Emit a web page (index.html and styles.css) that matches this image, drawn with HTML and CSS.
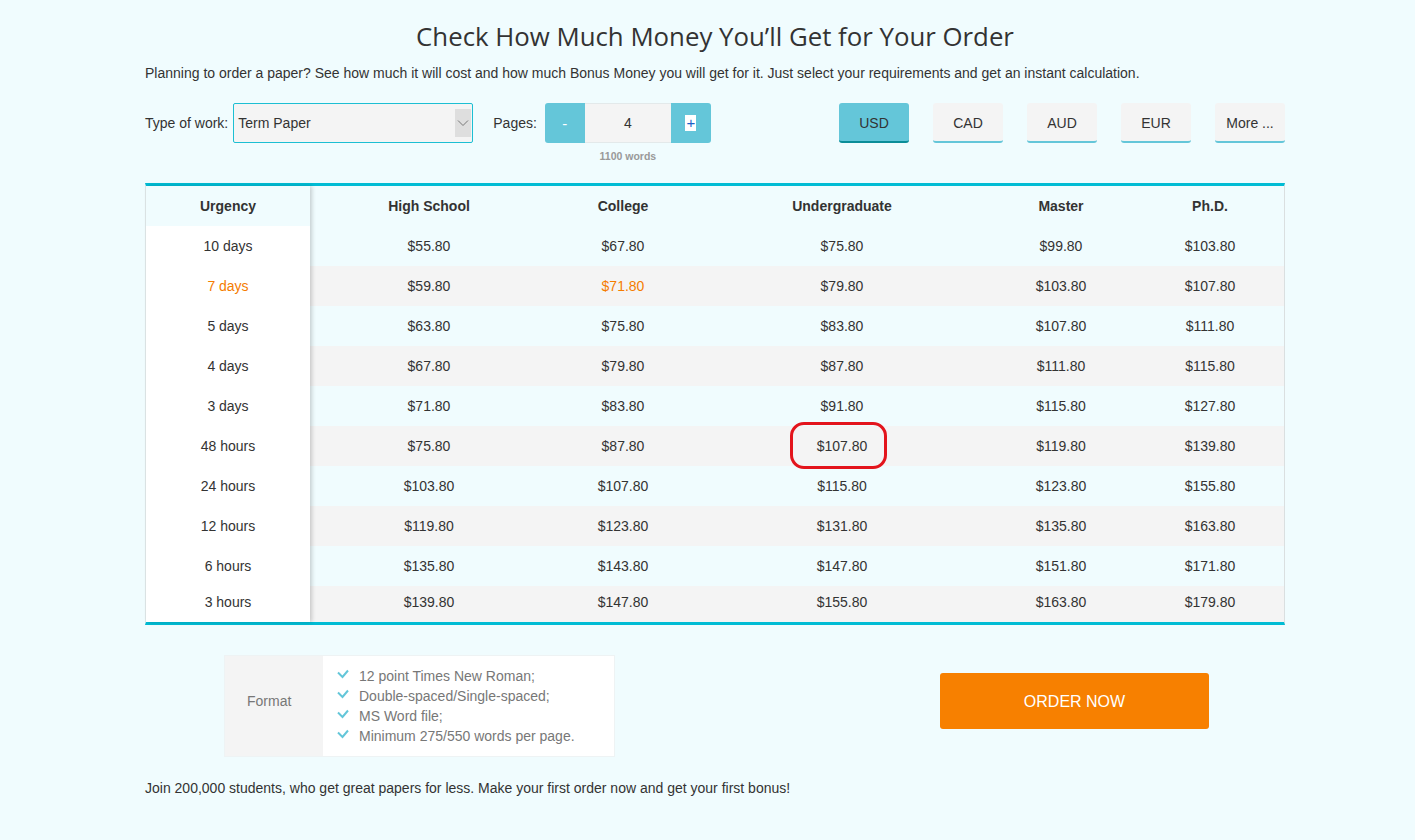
FILE: index.html
```html
<!DOCTYPE html>
<html lang="en">
<head>
<meta charset="utf-8">
<title>Check How Much Money You'll Get for Your Order</title>
<link rel="stylesheet" href="styles.css">
</head>
<body>
<div class="page">
  <h1 class="title">Check How Much Money You’ll Get for Your Order</h1>
  <p class="intro">Planning to order a paper? See how much it will cost and how much Bonus Money you will get for it. Just select your requirements and get an instant calculation.</p>

  <div class="controls">
    <span class="label">Type of work:</span>
    <div class="select">
      <span class="select-value">Term Paper</span>
      <span class="select-arrow"><svg width="12" height="8" viewBox="0 0 12 8"><path d="M1 1.5 L6 6.5 L11 1.5" fill="none" stroke="#777" stroke-width="1"/></svg></span>
    </div>
    <span class="label pages-label">Pages:</span>
    <div class="stepper-wrap">
      <div class="stepper">
        <span class="step-btn minus">-</span>
        <span class="step-value">4</span>
        <span class="step-btn plus"><span class="plus-sel">+</span></span>
      </div>
      <div class="words">1100 words</div>
    </div>
    <div class="currencies">
      <span class="cur active">USD</span>
      <span class="cur">CAD</span>
      <span class="cur">AUD</span>
      <span class="cur">EUR</span>
      <span class="cur">More ...</span>
    </div>
  </div>

  <div class="table">
    <div class="urgency-col">
      <div class="cell head">Urgency</div>
      <div class="cell">10 days</div>
      <div class="cell hl">7 days</div>
      <div class="cell">5 days</div>
      <div class="cell">4 days</div>
      <div class="cell">3 days</div>
      <div class="cell">48 hours</div>
      <div class="cell">24 hours</div>
      <div class="cell">12 hours</div>
      <div class="cell">6 hours</div>
      <div class="cell last">3 hours</div>
    </div>
    <div class="prices">
      <div class="row head"><span>High School</span><span>College</span><span>Undergraduate</span><span>Master</span><span>Ph.D.</span></div>
      <div class="row odd"><span>$55.80</span><span>$67.80</span><span>$75.80</span><span>$99.80</span><span>$103.80</span></div>
      <div class="row even"><span>$59.80</span><span class="hl">$71.80</span><span>$79.80</span><span>$103.80</span><span>$107.80</span></div>
      <div class="row odd"><span>$63.80</span><span>$75.80</span><span>$83.80</span><span>$107.80</span><span>$111.80</span></div>
      <div class="row even"><span>$67.80</span><span>$79.80</span><span>$87.80</span><span>$111.80</span><span>$115.80</span></div>
      <div class="row odd"><span>$71.80</span><span>$83.80</span><span>$91.80</span><span>$115.80</span><span>$127.80</span></div>
      <div class="row even"><span>$75.80</span><span>$87.80</span><span>$107.80</span><span>$119.80</span><span>$139.80</span></div>
      <div class="row odd"><span>$103.80</span><span>$107.80</span><span>$115.80</span><span>$123.80</span><span>$155.80</span></div>
      <div class="row even"><span>$119.80</span><span>$123.80</span><span>$131.80</span><span>$135.80</span><span>$163.80</span></div>
      <div class="row odd"><span>$135.80</span><span>$143.80</span><span>$147.80</span><span>$151.80</span><span>$171.80</span></div>
      <div class="row even last"><span>$139.80</span><span>$147.80</span><span>$155.80</span><span>$163.80</span><span>$179.80</span></div>
    </div>
    <div class="mark"></div>
  </div>

  <div class="bottom">
    <div class="format">
      <div class="format-label">Format</div>
      <ul class="format-list">
        <li><svg class="check" width="12" height="10" viewBox="0 0 12 10"><path d="M1 3.5 L5.5 8 L11 1.5" fill="none" stroke="#64c6d9" stroke-width="2"/></svg>12 point Times New Roman;</li>
        <li><svg class="check" width="12" height="10" viewBox="0 0 12 10"><path d="M1 3.5 L5.5 8 L11 1.5" fill="none" stroke="#64c6d9" stroke-width="2"/></svg>Double-spaced/Single-spaced;</li>
        <li><svg class="check" width="12" height="10" viewBox="0 0 12 10"><path d="M1 3.5 L5.5 8 L11 1.5" fill="none" stroke="#64c6d9" stroke-width="2"/></svg>MS Word file;</li>
        <li><svg class="check" width="12" height="10" viewBox="0 0 12 10"><path d="M1 3.5 L5.5 8 L11 1.5" fill="none" stroke="#64c6d9" stroke-width="2"/></svg>Minimum 275/550 words per page.</li>
      </ul>
    </div>
    <a class="order" href="#">ORDER NOW</a>
  </div>

  <p class="footer">Join 200,000 students, who get great papers for less. Make your first order now and get your first bonus!</p>
</div>
</body>
</html>
```

FILE: styles.css
```css
html, body {
  margin: 0;
  padding: 0;
  background: #f0fcfe;
}
body {
  font-family: "Liberation Sans", Arial, sans-serif;
  font-size: 14px;
  color: #333;
}
.page {
  width: 1140px;
  margin-left: 145px;
  padding-top: 18px;
}
.title {
  margin: 0;
  text-align: center;
  font-family: "Open Sans", sans-serif;
  font-weight: 400;
  font-size: 25.8px;
  line-height: 36px;
  color: #333;
}
.intro {
  margin: 9px 0 0;
  line-height: 20px;
}
.controls {
  margin-top: 20px;
  display: flex;
  align-items: flex-start;
  height: 40px;
}
.label {
  line-height: 40px;
  font-size: 14px;
}
.select {
  margin-left: 5px;
  width: 240px;
  height: 40px;
  box-sizing: border-box;
  border: 1px solid #1cbfd3;
  border-radius: 2px;
  background: #f4f4f4;
  display: flex;
  align-items: center;
  justify-content: space-between;
  padding: 0 1px 0 4px;
}
.select-value {
  font-size: 14px;
}
.select-arrow {
  width: 16px;
  height: 28px;
  background: #dedede;
  display: flex;
  align-items: center;
  justify-content: center;
}
.pages-label {
  margin-left: 20px;
}
.stepper-wrap {
  margin-left: 8px;
  display: flex;
  flex-direction: column;
  align-items: center;
}
.stepper {
  display: flex;
  height: 40px;
  border-radius: 3px;
  overflow: hidden;
}
.step-btn {
  width: 40px;
  background: #64c6d9;
  color: #fff;
  display: flex;
  align-items: center;
  justify-content: center;
  font-size: 15px;
}
.plus-sel {
  background: #fff;
  color: #1a5fc8;
  line-height: 16px;
  padding: 0 1px;
}
.step-value {
  width: 86px;
  background: #f4f4f4;
  border-top: 1px solid #e3e9ea;
  border-bottom: 1px solid #e3e9ea;
  box-sizing: border-box;
  display: flex;
  align-items: center;
  justify-content: center;
  font-size: 14px;
}
.words {
  margin-top: 7px;
  font-size: 10.5px;
  font-weight: bold;
  color: #999;
}
.currencies {
  margin-left: auto;
  display: flex;
  gap: 24px;
}
.cur {
  width: 70px;
  height: 40px;
  box-sizing: border-box;
  background: #f4f4f4;
  border-bottom: 2px solid #64c6d9;
  border-radius: 3px;
  display: flex;
  align-items: center;
  justify-content: center;
  padding-top: 2px;
  font-size: 14px;
}
.cur.active {
  background: #64c6d9;
  border-bottom-color: #0b8d98;
}
.table {
  position: relative;
  margin-top: 40px;
  display: flex;
  border-top: 3px solid #00bcd4;
  border-bottom: 3px solid #00bcd4;
  border-left: 1px solid #dfe7e8;
  border-right: 1px solid #dadfe0;
}
.urgency-col {
  width: 164px;
  background: #fff;
  box-shadow: 2px 0 4px rgba(0, 0, 0, 0.18);
  position: relative;
  z-index: 1;
}
.cell {
  height: 40px;
  display: flex;
  align-items: center;
  justify-content: center;
}
.cell.head {
  background: #f0fcfe;
  font-weight: bold;
}
.cell.last, .row.last {
  height: 36px;
  box-sizing: border-box;
  padding-bottom: 4px;
}
.hl {
  color: #f57c00;
}
.prices {
  flex: 1;
}
.row {
  height: 40px;
  display: grid;
  grid-template-columns: 238px 150px 288px 150px 148px;
  align-items: center;
  text-align: center;
}
.row.head {
  background: #f0fcfe;
  font-weight: bold;
}
.row.odd {
  background: #f0fcfe;
}
.row.even {
  background: #f4f4f4;
}
.mark {
  position: absolute;
  left: 644px;
  top: 236px;
  width: 97px;
  height: 47px;
  box-sizing: border-box;
  border: 3px solid #e3141c;
  border-radius: 14px;
  z-index: 2;
}
.bottom {
  margin-top: 31px;
  padding-left: 80px;
  display: flex;
  align-items: flex-start;
}
.format {
  display: flex;
  width: 389px;
  height: 100px;
  background: #fff;
  box-shadow: 0 0 0 1px #eef3f4;
}
.format-label {
  width: 98px;
  background: #f4f4f4;
  color: #777;
  display: flex;
  align-items: center;
  padding: 0 0 10px 22px;
  box-sizing: border-box;
}
.format-list {
  list-style: none;
  margin: 0;
  padding: 10px 0 0 14px;
  color: #777;
}
.format-list li {
  line-height: 20px;
  display: flex;
  align-items: center;
}
.check {
  margin-right: 10px;
  margin-top: -4px;
}
.order {
  margin-left: 326px;
  margin-top: 17px;
  width: 269px;
  height: 56px;
  box-sizing: border-box;
  padding-top: 2px;
  background: #f78000;
  color: #fff;
  border-radius: 3px;
  text-decoration: none;
  display: flex;
  align-items: center;
  justify-content: center;
  font-size: 16px;
}
.footer {
  margin: 22px 0 0;
  line-height: 20px;
}
```
